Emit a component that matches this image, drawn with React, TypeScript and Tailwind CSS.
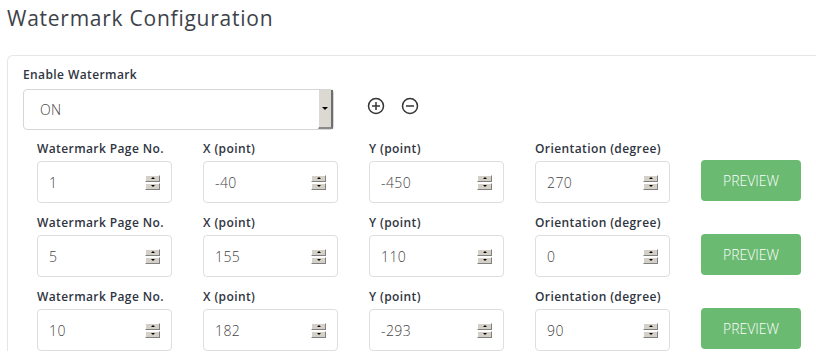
import React from "react";

type Row = { page: string; x: string; y: string; deg: string };

const rows: Row[] = [
  { page: "1", x: "-40", y: "-450", deg: "270" },
  { page: "5", x: "155", y: "110", deg: "0" },
  { page: "10", x: "182", y: "-293", deg: "90" },
];

const font = { fontFamily: '"Open Sans", "DejaVu Sans", sans-serif' };

function SpinHalf({ up }: { up?: boolean }) {
  return (
    <div className="h-[7px] w-[15px] bg-[#d4d0c8] border-t border-l border-t-white border-l-white border-b border-r border-b-[#808080] border-r-[#808080] flex items-center justify-center">
      {up ? (
        <div className="w-0 h-0 border-l-[2px] border-r-[2px] border-b-[2px] border-l-transparent border-r-transparent border-b-black" />
      ) : (
        <div className="w-0 h-0 border-l-[2px] border-r-[2px] border-t-[2px] border-l-transparent border-r-transparent border-t-black" />
      )}
    </div>
  );
}

function Spinner() {
  return (
    <div className="flex flex-col gap-px">
      <SpinHalf up />
      <SpinHalf />
    </div>
  );
}

function NumberField({ label, value }: { label: string; value: string }) {
  return (
    <div className="w-[135px]">
      <div className="h-4 leading-4 mb-1 text-[12px] tracking-[0.4px] font-semibold text-[#2f3542] whitespace-nowrap">
        {label}
      </div>
      <div className="h-[42px] flex items-center justify-between pl-[11px] pr-[11px] border border-[#dedede] rounded-[4px] bg-white">
        <span className="text-[14px] tracking-[0.4px] font-light text-[#444]">{value}</span>
        <Spinner />
      </div>
    </div>
  );
}

function CircleIcon({ plus }: { plus?: boolean }) {
  return (
    <svg width="18" height="18" viewBox="0 0 18 18" fill="none" stroke="#333" strokeWidth="1.5">
      <circle cx="9" cy="9" r="7.5" />
      <path d="M5 9h8" />
      {plus && <path d="M9 5v8" />}
    </svg>
  );
}

export default function App() {
  return (
    <div className="bg-white min-h-screen overflow-hidden pl-[7px]" style={font}>
      <h1 className="pt-[4px] h-[55px] text-[21px] tracking-[0.75px] leading-7 font-normal text-[#3d4249]">
        Watermark Configuration
      </h1>

      <div className="w-[830px] border-l border-t border-[#e6e6e6] rounded-tl-[6px] pl-[15px] pt-[11px]">
        <div className="h-4 leading-4 mb-[6px] text-[12px] tracking-[0.4px] font-semibold text-[#2f3542]">
          Enable Watermark
        </div>
        <div className="flex items-center">
          <div className="w-[311px] h-[41px] flex items-stretch border border-[#d6d6d6] rounded-[4px]">
            <span className="flex-1 flex items-center pl-4 text-[14px] tracking-[0.4px] font-light text-[#444]">ON</span>
            <div className="w-[15px] bg-[#dcd9d2] border-l border-l-white border-r-2 border-r-[#6e6e6e] border-b-2 border-b-[#8a8a8a] flex items-center justify-center">
              <div className="w-0 h-0 border-l-[3px] border-r-[3px] border-t-[3px] border-l-transparent border-r-transparent border-t-black" />
            </div>
          </div>
          <div className="flex items-center gap-[16px] ml-[33px] mb-2">
            <CircleIcon plus />
            <CircleIcon />
          </div>
        </div>

        <div className="pl-[14px] pt-[11px] flex flex-col gap-3">
          {rows.map((r, i) => (
            <div key={i} className="flex gap-[31px]">
              <NumberField label="Watermark Page No." value={r.page} />
              <NumberField label="X (point)" value={r.x} />
              <NumberField label="Y (point)" value={r.y} />
              <NumberField label="Orientation (degree)" value={r.deg} />
              <button className="mt-[19px] w-[100px] h-[41px] rounded-[4px] bg-[#6aba72] text-white text-[14px] font-light">
                PREVIEW
              </button>
            </div>
          ))}
        </div>
      </div>
    </div>
  );
}
